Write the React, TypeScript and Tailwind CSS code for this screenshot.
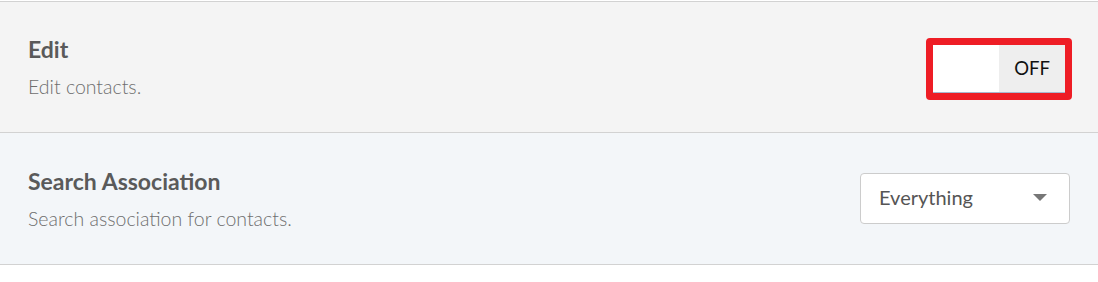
import React from "react";

const font = { fontFamily: '"Lato", "Liberation Sans", sans-serif' };

export default function App() {
  return (
    <div className="w-[1098px] h-[282px] bg-white" style={font}>
      <div className="h-px" />
      <div className="border-t border-b border-[#d2d2d2] bg-[#f4f4f4] h-[132px] flex items-center justify-between pl-[28px] pr-[26px]">
        <div className="flex flex-col pt-[1px]">
          <h3 className="text-[23px] leading-[26px] font-bold text-[#5a5a5a]">Edit</h3>
          <p className="text-[19.5px] leading-[24px] font-light text-[#6e6e6e] mt-[13px]">Edit contacts.</p>
        </div>
        <div className="rounded-[4px] border-[7px] border-[#ee1d25] flex mt-[4px]">
          <div className="w-[66px] h-[48px] bg-white border-b border-[#a9b8cf]" />
          <div className="w-[66px] h-[48px] bg-[#eeeeee] border-b border-[#a9b8cf] flex items-center justify-center text-[18.5px] text-[#111]">
            OFF
          </div>
        </div>
      </div>
      <div className="border-b border-[#d2d2d2] bg-[#f3f6f9] h-[132px] flex items-center justify-between pl-[28px] pr-[28px]">
        <div className="flex flex-col pt-[1px]">
          <h3 className="text-[23px] leading-[26px] font-bold text-[#5a5a5a]">Search Association</h3>
          <p className="text-[19.5px] leading-[24px] font-light text-[#6e6e6e] mt-[13px]">Search association for contacts.</p>
        </div>
        <div className="w-[210px] h-[51px] bg-white border border-[#cccccc] rounded-[4px] flex items-center justify-between pl-[18px] pr-[22px]">
          <span className="text-[20px] leading-[24px] text-[#555] mb-[3px]">Everything</span>
          <svg width="14" height="7" viewBox="0 0 14 7" className="mb-[2px]">
            <path d="M0 0 H14 L7 7 Z" fill="#777" />
          </svg>
        </div>
      </div>
    </div>
  );
}
